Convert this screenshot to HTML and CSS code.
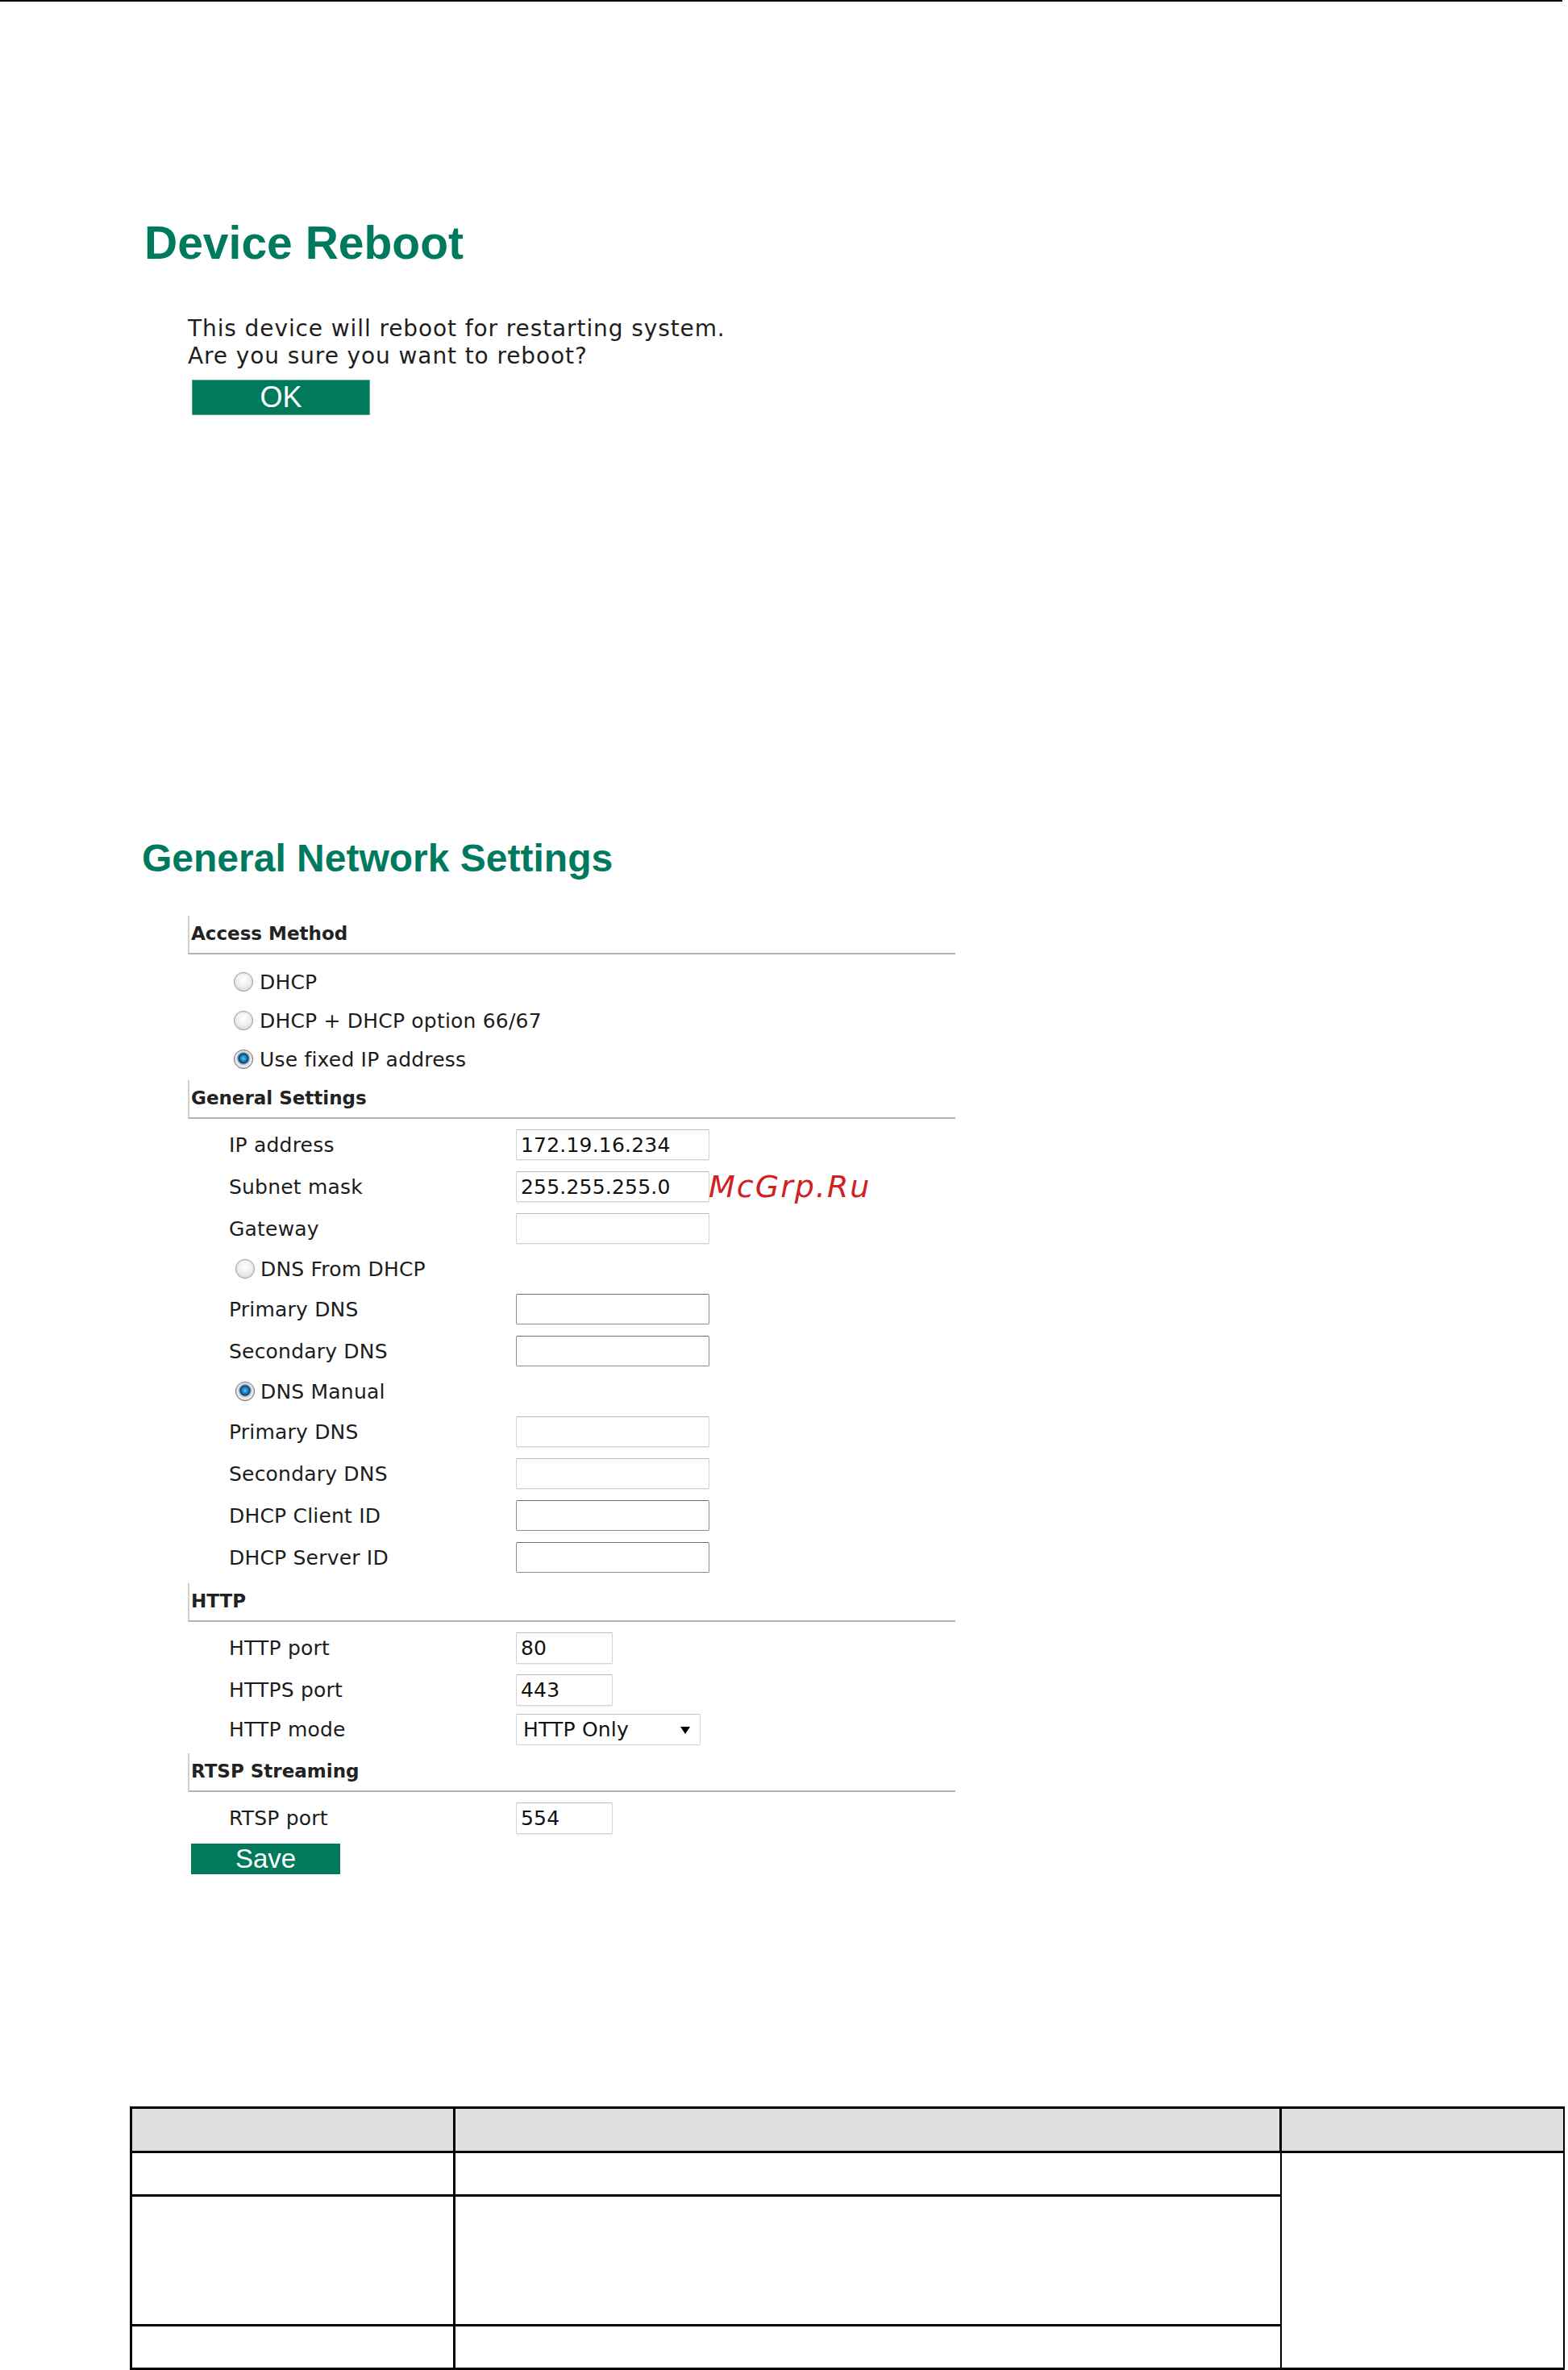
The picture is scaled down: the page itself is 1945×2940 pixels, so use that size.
FILE: index.html
```html
<!DOCTYPE html>
<html>
<head>
  <meta charset="utf-8">
  <title>Device Reboot / General Network Settings</title>
  <link rel="stylesheet" href="styles.css">
</head>
<body>
  <div class="top-rule"></div>

  <!-- Device reboot page -->
  <h1 class="title title-reboot">Device Reboot</h1>
  <p class="msg">This device will reboot for restarting system.<br>Are you sure you want to reboot?</p>
  <button class="btn btn-ok" type="button">OK</button>

  <!-- General network settings page -->
  <h1 class="title title-net">General Network Settings</h1>
  <form class="netform">
    <div class="sec-head">Access Method</div>
    <div class="sec-body sec-body-access">
      <label class="row row-radio"><input class="radio" type="radio" name="access">DHCP</label>
      <label class="row row-radio"><input class="radio" type="radio" name="access">DHCP + DHCP option 66/67</label>
      <label class="row row-radio"><input class="radio" type="radio" name="access" checked>Use fixed IP address</label>
    </div>

    <div class="sec-head">General Settings</div>
    <div class="sec-body">
      <div class="row"><span class="lbl">IP address</span><input class="field field-light" value="172.19.16.234"></div>
      <div class="row"><span class="lbl">Subnet mask</span><input class="field field-light" value="255.255.255.0"><span class="watermark">McGrp.Ru</span></div>
      <div class="row"><span class="lbl">Gateway</span><input class="field field-light" value=""></div>
      <label class="row row-radio row-radio-sub"><input class="radio" type="radio" name="dns">DNS From DHCP</label>
      <div class="row"><span class="lbl">Primary DNS</span><input class="field" value=""></div>
      <div class="row"><span class="lbl">Secondary DNS</span><input class="field" value=""></div>
      <label class="row row-radio row-radio-sub"><input class="radio" type="radio" name="dns" checked>DNS Manual</label>
      <div class="row"><span class="lbl">Primary DNS</span><input class="field field-light" value=""></div>
      <div class="row"><span class="lbl">Secondary DNS</span><input class="field field-light" value=""></div>
      <div class="row"><span class="lbl">DHCP Client ID</span><input class="field" value=""></div>
      <div class="row"><span class="lbl">DHCP Server ID</span><input class="field" value=""></div>
    </div>

    <div class="sec-head">HTTP</div>
    <div class="sec-body">
      <div class="row"><span class="lbl">HTTP port</span><input class="field field-light field-port" value="80"></div>
      <div class="row"><span class="lbl">HTTPS port</span><input class="field field-light field-port" value="443"></div>
      <div class="row row-select"><span class="lbl">HTTP mode</span><span class="select">HTTP Only</span></div>
    </div>

    <div class="sec-head">RTSP Streaming</div>
    <div class="sec-body">
      <div class="row"><span class="lbl">RTSP port</span><input class="field field-light field-port" value="554"></div>
    </div>

    <button class="btn btn-save" type="button">Save</button>
  </form>

  <!-- parameter table (cells empty in the original) -->
  <table class="spec">
    <tr class="spec-head">
      <td class="c1"></td>
      <td class="c2"></td>
      <td class="c3"></td>
    </tr>
    <tr class="spec-r1">
      <td class="c1"></td>
      <td class="c2"></td>
      <td class="c3" rowspan="3"></td>
    </tr>
    <tr class="spec-r2">
      <td class="c1"></td>
      <td class="c2"></td>
    </tr>
    <tr class="spec-r3">
      <td class="c1"></td>
      <td class="c2"></td>
    </tr>
  </table>
</body>
</html>
```

FILE: styles.css
```css
body {
  margin: 0;
  padding: 0;
  background: #ffffff;
  color: #1c1c1c;
  font-family: "DejaVu Sans", Verdana, sans-serif;
}

.top-rule {
  width: 1938px;
  height: 2px;
  background: #000;
}

.title {
  font-family: "Liberation Sans", Arial, sans-serif;
  font-weight: bold;
  color: #007a5e;
  margin: 0;
}

.title-reboot {
  font-size: 57px;
  line-height: 64px;
  margin: 267px 0 0 179px;
}

.title-net {
  font-size: 48px;
  line-height: 56px;
  margin: 522px 0 0 176px;
}

.msg {
  margin: 58px 0 0 233px;
  font-size: 28px;
  line-height: 34px;
  letter-spacing: 0.9px;
  color: #1e1e1e;
}

.btn {
  display: block;
  padding: 0;
  border: 1px solid #56a98f;
  background: #007a5b;
  color: #fff;
  font-family: "Liberation Sans", Arial, sans-serif;
  text-align: center;
  cursor: pointer;
}

.btn-ok {
  width: 221px;
  height: 44px;
  margin: 12px 0 0 238px;
  font-size: 36px;
  line-height: 40px;
}

.btn-save {
  width: 185px;
  height: 38px;
  margin: 0 0 0 4px;
  font-size: 33px;
  line-height: 34px;
  border-color: #007a5b;
}

/* network form */
.netform {
  width: 952px;
  margin: 43px 0 0 233px;
  font-size: 25px;
  letter-spacing: 0.2px;
  color: #1c1c1c;
}

.sec-head {
  box-sizing: border-box;
  height: 48px;
  display: flex;
  align-items: flex-end;
  padding: 0 0 11px 2px;
  border-left: 2px solid #d0d0d0;
  border-bottom: 2px solid #b2b2b2;
  font-size: 23px;
  font-weight: bold;
  line-height: 26px;
  letter-spacing: 0;
  color: #222;
}

.sec-body {
  padding: 6px 0;
}

.sec-body-access {
  padding: 10px 0 2px;
}

.row {
  position: relative;
  display: flex;
  align-items: center;
  height: 52px;
  padding-left: 51px;
}

.row-radio {
  height: 48px;
}

.row-select {
  height: 47px;
}

.lbl {
  width: 356px;
  flex: none;
}

.radio {
  -webkit-appearance: none;
  appearance: none;
  box-sizing: border-box;
  width: 24px;
  height: 24px;
  margin: 0 8px 0 6px;
  border: 1px solid #9c9c9c;
  border-radius: 50%;
  background: radial-gradient(circle at 50% 40%, #ffffff 0, #f2f2f2 40%, #cfcfcf 100%);
  box-shadow: 0 0 1px #bbb;
}

.radio:checked {
  border-color: #6d6d6d;
  background: radial-gradient(circle at 50% 45%, #5bc3f5 0, #1678b8 4px, #0a3f66 6px, #8fa3b3 7px, #e9eef2 9px, #cfd6dc 100%);
}

.row-radio-sub .radio {
  margin-left: 8px;
  margin-right: 7px;
}

.field {
  box-sizing: border-box;
  width: 240px;
  height: 38px;
  padding: 0 0 0 5px;
  border: 1px solid #8d8d8d;
  border-top-color: #6f6f6f;
  border-radius: 2px;
  font-family: "DejaVu Sans", Verdana, sans-serif;
  font-size: 25px;
  letter-spacing: 0.2px;
  color: #111;
  background: #fff;
}

.field-light {
  border-color: #d3d3d3;
  border-top-color: #b9b9b9;
  box-shadow: 0 1px 1px #eee;
}

.field-port {
  width: 120px;
  height: 39px;
}

.select {
  position: relative;
  box-sizing: border-box;
  width: 229px;
  height: 39px;
  padding: 0 0 0 8px;
  border: 1px solid #d3d3d3;
  border-top-color: #bdbdbd;
  border-radius: 2px;
  line-height: 37px;
  color: #111;
}

.select::after {
  content: "";
  position: absolute;
  right: 12px;
  top: 15px;
  border-left: 6px solid transparent;
  border-right: 6px solid transparent;
  border-top: 9px solid #000;
}

.watermark {
  position: absolute;
  left: 646px;
  top: 7px;
  font-size: 38px;
  line-height: 38px;
  font-style: italic;
  letter-spacing: 2px;
  color: #d0201f;
}

/* table at page foot */
.spec {
  width: 1780px;
  margin: 288px 0 0 161px;
  border-collapse: collapse;
  border-top: 3px solid #000;
  border-left: 3px solid #000;
  border-right: 2px solid #000;
}

.spec td {
  padding: 0;
  border: 2px solid #000;
  border-top-width: 3px;
  border-bottom-width: 3px;
}

.spec .c1 {
  width: 398px;
  border-right-width: 3px;
}

.spec .c2 {
  width: 1022px;
}

.spec-head td {
  height: 52px;
  background: #dfdfdf;
  border-top: 0;
}

.spec-head .c2,
.spec-head .c3 {
  border-left-width: 3px;
}

.spec-r1 td {
  height: 51px;
}

.spec-r2 td {
  height: 158px;
}

.spec-r3 td {
  height: 51px;
}
```
